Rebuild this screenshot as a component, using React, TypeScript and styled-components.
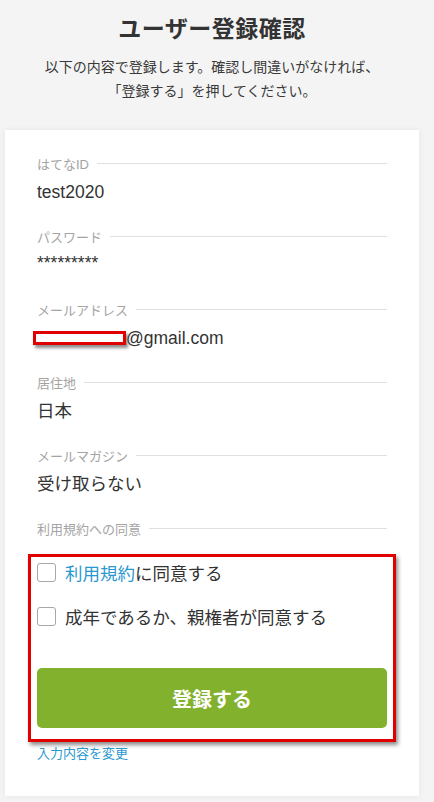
import React from "react";
import styled, { createGlobalStyle } from "styled-components";

const GlobalStyle = createGlobalStyle`
  html, body {
    margin: 0;
    padding: 0;
    background: #f4f4f4;
  }
  body {
    font-family: "Liberation Sans", "Noto Sans CJK JP", sans-serif;
    color: #333;
  }
`;

const Page = styled.div`
  width: 414px;
  margin-left: 5px;
  padding-bottom: 7px;
`;

const Header = styled.header`
  text-align: center;
  padding-top: 13px;
`;

const Title = styled.h1`
  margin: 0;
  font-size: 23px;
  line-height: 32px;
  font-weight: bold;
  color: #333;
  letter-spacing: 0.5px;
`;

const Lead = styled.p`
  margin: 10px 0 0;
  font-size: 14px;
  line-height: 24px;
  color: #3a3a3a;
`;

const Card = styled.section`
  margin-top: 27px;
  background: #fff;
  box-shadow: 0 0 6px rgba(0, 0, 0, 0.07);
  padding: 25px 32px 33px;
  display: flex;
  flex-direction: column;
`;

const Field = styled.div`
  display: flex;
  flex-direction: column;
  margin-bottom: 23px;
`;

const LabelRow = styled.div`
  display: flex;
  align-items: center;
  gap: 8px;
  height: 16px;
  font-size: 13px;
  color: #a4a4a4;
  white-space: nowrap;
  &::after {
    content: "";
    flex: 1;
    height: 1px;
    background: #e0e0e0;
  }
`;

const Value = styled.div<{ $top?: boolean }>`
  margin-top: 8px;
  font-size: 17.5px;
  line-height: 26px;
  color: #333;
  ${(p) => (p.$top ? "line-height: 22px; margin-bottom: 4px;" : "")}
`;

const Redacted = styled.span`
  display: inline-block;
  box-sizing: border-box;
  width: 93px;
  height: 14px;
  margin-left: -4px;
  border: 3px solid #e00000;
  background: #fff;
  vertical-align: -1px;
  box-shadow: 2px 3px 3px rgba(0, 0, 0, 0.45);
`;

const Agreement = styled.div`
  position: relative;
  display: flex;
  flex-direction: column;
  margin-top: 14px;
`;

const Highlight = styled.div`
  position: absolute;
  left: -9px;
  right: -9px;
  top: 4px;
  bottom: -14px;
  border: 3px solid #e00000;
  box-shadow: 2px 3px 4px rgba(0, 0, 0, 0.45);
  pointer-events: none;
`;

const CheckRow = styled.label`
  display: flex;
  align-items: center;
  gap: 9px;
  height: 44px;
  font-size: 17.5px;
  color: #333;
`;

const Box = styled.span`
  width: 19px;
  height: 19px;
  box-sizing: border-box;
  border: 1px solid #a8a8a8;
  border-radius: 3px;
  background: #fff;
  flex: none;
`;

const BlueLink = styled.a<{ $small?: boolean }>`
  color: #2a98d0;
  text-decoration: none;
  font-size: ${(p) => (p.$small ? "13px" : "inherit")};
`;

const SubmitButton = styled.button`
  margin-top: 30px;
  height: 60px;
  border: none;
  border-radius: 5px;
  background: #82b22d;
  color: #fff;
  font-family: "Liberation Sans", "Noto Sans CJK JP", sans-serif;
  font-size: 20px;
  font-weight: bold;
  cursor: pointer;
`;

const LinkRow = styled.div`
  margin-top: 16px;
  line-height: 18px;
`;

export default function App() {
  return (
    <>
      <GlobalStyle />
      <Page>
        <Header>
          <Title>ユーザー登録確認</Title>
          <Lead>
            以下の内容で登録します。確認し間違いがなければ、
            <br />
            「登録する」を押してください。
          </Lead>
        </Header>
        <Card>
          <Field>
            <LabelRow>はてなID</LabelRow>
            <Value>test2020</Value>
          </Field>
          <Field>
            <LabelRow>パスワード</LabelRow>
            <Value $top>*********</Value>
          </Field>
          <Field>
            <LabelRow>メールアドレス</LabelRow>
            <Value>
              <Redacted />
              @gmail.com
            </Value>
          </Field>
          <Field>
            <LabelRow>居住地</LabelRow>
            <Value>日本</Value>
          </Field>
          <Field>
            <LabelRow>メールマガジン</LabelRow>
            <Value>受け取らない</Value>
          </Field>
          <LabelRow>利用規約への同意</LabelRow>
          <Agreement>
            <CheckRow>
              <Box />
              <span>
                <BlueLink href="#">利用規約</BlueLink>に同意する
              </span>
            </CheckRow>
            <CheckRow>
              <Box />
              <span>成年であるか、親権者が同意する</span>
            </CheckRow>
            <SubmitButton type="button">登録する</SubmitButton>
            <Highlight />
          </Agreement>
          <LinkRow>
            <BlueLink href="#" $small>
              入力内容を変更
            </BlueLink>
          </LinkRow>
        </Card>
      </Page>
    </>
  );
}
